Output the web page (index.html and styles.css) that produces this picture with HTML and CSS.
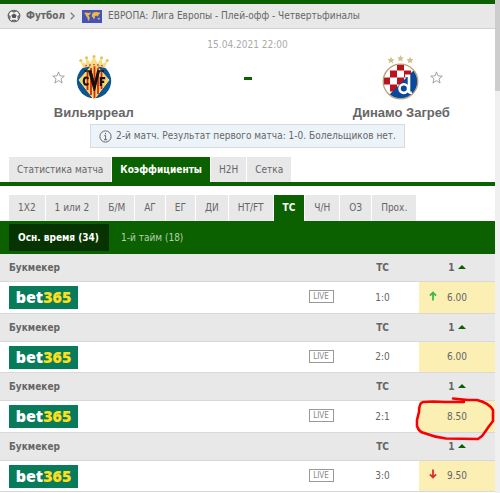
FILE: index.html
```html
<!DOCTYPE html>
<html lang="ru">
<head>
    <meta charset="UTF-8">
    <meta name="viewport" content="width=device-width, initial-scale=1.0">
    <title>Вильярреал - Динамо Загреб</title>
    <link rel="stylesheet" href="styles.css">
</head>
<body>
    <!-- shared shapes -->
    <svg class="defs" width="0" height="0" aria-hidden="true">
        <symbol id="star" viewBox="0 0 13 13">
            <path d="M6.5 .9 L8 4.9 L12.3 5.1 L9 7.8 L10.1 12 L6.5 9.6 L2.9 12 L4 7.8 L.7 5.1 L5 4.9 Z" fill="#fff" stroke="#999" stroke-width=".9"/>
        </symbol>
        <symbol id="sort" viewBox="0 0 8 4">
            <path d="M0 4 L4 0 L8 4 Z" fill="#0b6000"/>
        </symbol>
    </svg>

    <main class="page">
        <nav class="breadcrumb">
            <svg class="ball" width="14" height="14" viewBox="0 0 14 14">
                <circle cx="7" cy="7" r="5.8" fill="#f2f2f2" stroke="#666" stroke-width="1.1"/>
                <path d="M7 4.4 L9.6 6.2 L8.6 9.1 H5.4 L4.4 6.2 Z" fill="#555"/>
                <path d="M4.6 1.7 L7 3 L9.4 1.7 M1.2 6.3 L3 7.6 L2.6 10.2 M12.8 6.3 L11 7.6 L11.4 10.2 M5 12.5 L5.6 11.3 H8.4 L9 12.5" fill="none" stroke="#666" stroke-width="1.3"/>
            </svg>
            <a class="sport" href="#">Футбол</a>
            <svg class="chevron" width="5" height="8" viewBox="0 0 5 8">
                <path d="M.7 .7 L4.2 4 L.7 7.3" fill="none" stroke="#777" stroke-width="1.2"/>
            </svg>
            <svg class="flag" width="20" height="13" viewBox="0 0 20 13">
                <rect width="20" height="13" fill="#4353b8"/>
                <path d="M2 3 L4 2.4 L7 3 L9 2 L8 4.4 L6.4 5.6 L7.8 7.4 L7 10.4 L6 10.8 L5.4 7.6 L4 6 L3.4 4.2 Z M10 4.2 L11.2 2.6 L14 2 L17.8 2.4 L18 3.8 L16.6 4.6 L16 6.8 L14.6 5.6 L13.8 6.2 L12.8 5.6 L13 7.6 L11.8 9.6 L11 7.4 L9.8 6.4 Z M15.6 8 L17.6 7.8 L17.8 9.6 L16 9.4 Z" fill="#f0b840"/>
            </svg>
            <a class="league" href="#">ЕВРОПА: Лига Европы - Плей-офф - Четвертьфиналы</a>
        </nav>

        <section class="match">
            <div class="team">
                <div class="team-logo home">
                    <button class="fav" aria-label="В избранное"><svg width="13" height="13"><use href="#star"/></svg></button>
                    <svg width="36" height="45" viewBox="0 0 36 45">
                        <circle cx="18" cy="26" r="17.2" fill="#0c5590"/>
                        <path d="M18 8 L33 25 L18 44.5 L3 25 Z" fill="#fbd75c" stroke="#fbe48c"/>
                        <path d="M11.5 17 V35 M15 13 V40 M18.5 11 V43 M22 13 V39 M25.5 17 V34" stroke="#d9241c" stroke-width="1.8"/>
                        <path d="M7 13 L4.6 6 L9.5 9 L10.5 3 L14.5 8 L18 1.5 L21.5 8 L25.5 3 L26.5 9 L31.4 6 L29 13 Q18 9.5 7 13 Z" fill="#f9dc84"/>
                        <g fill="#ecc452">
                            <circle cx="4.8" cy="5.5" r="1.6"/><circle cx="10.5" cy="2.8" r="1.6"/><circle cx="18" cy="1.7" r="1.6"/><circle cx="25.5" cy="2.8" r="1.6"/><circle cx="31.2" cy="5.5" r="1.6"/>
                        </g>
                        <path d="M9 11 Q18 8.5 27 11" fill="none" stroke="#c64a22" stroke-width="1.2" stroke-dasharray="2 2"/>
                        <path d="M8.5 16 H15 L18.4 30 L21.6 16 H28" fill="none" stroke="#15110c" stroke-width="1.3"/>
                        <path d="M12.2 16 H15.6 L18.6 28 L21.4 16 H24 L19 36 H17.7 Z" fill="#15110c"/>
                        <path d="M12.3 24 Q10.4 21.3 8.4 23.4 Q7 26 8.4 28.7 Q10.4 30.8 12.3 28.3" fill="none" stroke="#15110c" stroke-width="2.2"/>
                        <path d="M24.8 31 V23.2 H29.2 M24.8 26.8 H28.2" fill="none" stroke="#15110c" stroke-width="2.2"/>
                    </svg>
                </div>
                <a class="team-name" href="#">Вильярреал</a>
            </div>

            <div class="score">
                <time datetime="2021-04-15T22:00">15.04.2021 22:00</time>
                <span class="dash"></span>
            </div>

            <div class="team">
                <div class="team-logo away">
                    <svg width="37" height="45" viewBox="0 0 37 45">
                        <clipPath id="disc"><circle cx="18.5" cy="26.5" r="17"/></clipPath>
                        <g clip-path="url(#disc)">
                            <rect y="8" width="37" height="37" fill="#fff"/>
                            <path d="M15 8 h7 v7.5 h-7z M22 15.5 h7 v7 h-7z M8 15.5 h7 v7 h-7z M1 22.5 h7 v7 h-7z M15 22.5 h7 v7 h-7z M8 29.5 h7 v7 h-7z" fill="#b9141c"/>
                            <path d="M35 12 L6 41 L12 46 H37 V12 Z" fill="#0a489b"/>
                        </g>
                        <circle cx="18.5" cy="26.5" r="17.3" fill="none" stroke="#b5a47c" stroke-width="1.3"/>
                        <circle cx="21.8" cy="33.6" r="4.3" fill="none" stroke="#fff" stroke-width="2.6"/>
                        <path d="M23 20.8 H27 V36.5 Q27 38.3 29.8 37.4" fill="none" stroke="#fff" stroke-width="2.6"/>
                        <g fill="#d2c08a">
                            <path d="M18.5 0 L19.5 2.3 L22 2.5 L20.1 4.1 L20.7 6.6 L18.5 5.2 L16.3 6.6 L16.9 4.1 L15 2.5 L17.5 2.3 Z"/>
                            <path d="M9 1.8 L10 4.1 L12.5 4.3 L10.6 5.9 L11.2 8.4 L9 7 L6.8 8.4 L7.4 5.9 L5.5 4.3 L8 4.1 Z"/>
                            <path d="M28 1.8 L29 4.1 L31.5 4.3 L29.6 5.9 L30.2 8.4 L28 7 L25.8 8.4 L26.4 5.9 L24.5 4.3 L27 4.1 Z"/>
                        </g>
                    </svg>
                    <button class="fav" aria-label="В избранное"><svg width="13" height="13"><use href="#star"/></svg></button>
                </div>
                <a class="team-name" href="#">Динамо Загреб</a>
            </div>
        </section>

        <p class="notice">
            <svg width="13" height="13" viewBox="0 0 13 13">
                <circle cx="6.5" cy="6.5" r="5.6" fill="none" stroke="#666"/>
                <path d="M6.5 3 V4.4 M5.3 5.6 H6.6 V9.6 M5 9.7 H8.2" fill="none" stroke="#666"/>
            </svg>
            2-й матч. Результат первого матча: 1-0. Болельщиков нет.
        </p>

        <nav class="tabs">
            <a href="#">Статистика матча</a>
            <a href="#" class="active">Коэффициенты</a>
            <a href="#">H2H</a>
            <a href="#">Сетка</a>
        </nav>

        <nav class="subtabs">
            <a href="#">1X2</a>
            <a href="#">1 или 2</a>
            <a href="#">Б/М</a>
            <a href="#">АГ</a>
            <a href="#">ЕГ</a>
            <a href="#">ДИ</a>
            <a href="#">HT/FT</a>
            <a href="#" class="active">ТС</a>
            <a href="#">Ч/Н</a>
            <a href="#">ОЗ</a>
            <a href="#">Прох.</a>
        </nav>

        <nav class="periods">
            <a href="#" class="active">Осн. время (34)</a>
            <a href="#">1-й тайм (18)</a>
        </nav>

        <table class="odds">
            <colgroup><col><col class="col-live"><col class="col-score"><col class="col-odd"></colgroup>
            <tbody>
                <tr class="head"><th colspan="2">Букмекер</th><th>ТС</th><th>1 <svg width="8" height="4"><use href="#sort"/></svg></th></tr>
                <tr>
                    <td><a class="bet" href="#">bet<b>365</b></a></td>
                    <td><a class="live" href="#">LIVE</a></td>
                    <td>1:0</td>
                    <td class="odd">
                        <svg class="arrow" width="8" height="10" viewBox="0 0 8 10"><path d="M4 9.5 V2 M.9 4.7 L4 1.5 L7.1 4.7" fill="none" stroke="#3dbb46" stroke-width="1.8"/></svg>6.00
                    </td>
                </tr>
            </tbody>
            <tbody>
                <tr class="head"><th colspan="2">Букмекер</th><th>ТС</th><th>1 <svg width="8" height="4"><use href="#sort"/></svg></th></tr>
                <tr>
                    <td><a class="bet" href="#">bet<b>365</b></a></td>
                    <td><a class="live" href="#">LIVE</a></td>
                    <td>2:0</td>
                    <td class="odd">6.00</td>
                </tr>
            </tbody>
            <tbody>
                <tr class="head"><th colspan="2">Букмекер</th><th>ТС</th><th>1 <svg width="8" height="4"><use href="#sort"/></svg></th></tr>
                <tr>
                    <td><a class="bet" href="#">bet<b>365</b></a></td>
                    <td><a class="live" href="#">LIVE</a></td>
                    <td>2:1</td>
                    <td class="odd">
                        8.50
                        <svg class="mark" width="84" height="46" viewBox="0 0 84 46">
                            <path d="M50 5 H31 L19 4.5 L9 5 Q5 6 5 15 L3 23 V29 Q5 35 10 36 Q20 40 32 41.5 L64 42 Q69 39 71 35 Q75 29 79 24 V13 Q75 6 63 3 H54 L39 1.5" fill="none" stroke="#f80000" stroke-width="2.6" stroke-linejoin="round" stroke-linecap="round"/>
                        </svg>
                    </td>
                </tr>
            </tbody>
            <tbody>
                <tr class="head"><th colspan="2">Букмекер</th><th>ТС</th><th>1 <svg width="8" height="4"><use href="#sort"/></svg></th></tr>
                <tr>
                    <td><a class="bet" href="#">bet<b>365</b></a></td>
                    <td><a class="live" href="#">LIVE</a></td>
                    <td>3:0</td>
                    <td class="odd">
                        <svg class="arrow" width="8" height="10" viewBox="0 0 8 10"><path d="M4 .5 V8 M.9 5.3 L4 8.5 L7.1 5.3" fill="none" stroke="#d93030" stroke-width="1.8"/></svg>9.50
                    </td>
                </tr>
            </tbody>
        </table>
    </main>

    <div class="scrollbar"><div class="thumb"></div></div>
</body>
</html>
```

FILE: styles.css
```css
* {
    box-sizing: border-box;
}
body {
    display: flex;
    min-height: 100vh;
    margin: 0;
    background: #fff;
    color: #666;
    font-family: "DejaVu Sans Condensed", "DejaVu Sans", sans-serif;
    font-size: 10px;
    line-height: 14px;
}
a {
    color: inherit;
    text-decoration: none;
}
svg {
    flex: none;
}
.defs {
    position: absolute;
}
.page {
    flex: 1;
    min-width: 0;
}
.scrollbar {
    width: 5px;
    background: #f0f0f0;
}
.thumb {
    height: 91px;
    background: #cdcdcd;
}

/* header */
.breadcrumb {
    display: flex;
    align-items: center;
    height: 29px;
    padding-left: 7px;
    border-top: 4px solid #0b6000;
    border-bottom: 1px solid #d2d2d2;
    background: #e8e8e8;
}
.sport {
    margin: 0 5px;
    font-weight: bold;
}
.flag {
    margin: 0 6px 0 7px;
}
.match {
    display: grid;
    grid-template-columns: 1fr 120px 1fr;
    padding-top: 9px;
}
.team {
    display: flex;
    flex-direction: column;
    align-items: center;
    padding-top: 17px;
}
.team-logo {
    display: flex;
    align-items: center;
    gap: 11px;
}
.home {
    margin-right: 24px;
}
.away {
    margin-left: 22px;
}
.team-name {
    margin-top: 5px;
    font: bold 13px/16px "Liberation Sans", Arial, sans-serif;
}
.fav {
    display: flex;
    padding: 0;
    border: 0;
    background: none;
    cursor: pointer;
}
.score {
    display: flex;
    flex-direction: column;
    align-items: center;
    gap: 25px;
    color: #aaa;
    white-space: nowrap;
}
.dash {
    width: 8px;
    height: 3px;
    background: #0b6000;
}
.notice {
    display: flex;
    align-items: center;
    gap: 4px;
    width: fit-content;
    height: 24px;
    margin: 3px auto 0;
    padding: 0 8px;
    border: 1px solid #d5dce2;
    background: #ecf4fa;
    white-space: nowrap;
}

/* tabs */
.tabs,
.subtabs {
    display: flex;
    gap: 1px;
    padding-left: 9px;
    white-space: nowrap;
}
.tabs {
    margin-top: 9px;
    border-bottom: 4px solid #0b6000;
}
.subtabs {
    margin-top: 9px;
}
.tabs a,
.subtabs a {
    padding: 0 9px;
    background: #e8e8e8;
    line-height: 25px;
}
.tabs a {
    padding: 0 8px;
}
.subtabs a {
    line-height: 26px;
}
.tabs .active,
.subtabs .active {
    background: #0b6000;
    color: #fff;
    font-weight: bold;
}
.periods {
    display: flex;
    height: 33px;
    padding: 3px 9px;
    background: #0b6000;
    color: #b5cfb2;
    line-height: 28px;
}
.periods a {
    padding: 0 12px;
}
.periods .active {
    padding: 0 10px 0 9px;
    background: #063300;
    color: #fff;
    font-weight: bold;
}

/* odds table */
.odds {
    width: 100%;
    border-collapse: separate;
    border-spacing: 0;
    table-layout: fixed;
}
.col-live {
    width: 50px;
}
.col-score {
    width: 73px;
}
.col-odd {
    width: 76px;
}
.odds th,
.odds td {
    height: 31px;
    padding: 0;
    border-bottom: 1px solid #d8d8d8;
    text-align: center;
}
.odds tbody:nth-child(even) td {
    height: 32px;
}
.odds .head th {
    height: 28px;
    background: #e8e8e8;
}
.odds th:first-child,
.odds td:first-child {
    padding-left: 9px;
    text-align: left;
}
.odds th svg {
    vertical-align: 2px;
}
.bet {
    display: block;
    width: 69px;
    height: 23px;
    background: #087b5b;
    color: #fff;
    font: 800 16px/23px "Open Sans", "Noto Sans", sans-serif;
    text-align: center;
}
.bet b {
    color: #ffdf1b;
    font-weight: 800;
}
.live {
    display: block;
    width: 25px;
    height: 13px;
    margin: 0 auto 2px;
    border: 1px solid #999;
    color: #888;
    font-size: 8px;
    line-height: 11px;
}
.odds .odd {
    position: relative;
    background: #fcefb4;
    text-align: right;
    padding-right: 28px;
}
.arrow {
    margin-right: 10px;
}
.mark {
    position: absolute;
    top: -4px;
    left: -5px;
}
```
